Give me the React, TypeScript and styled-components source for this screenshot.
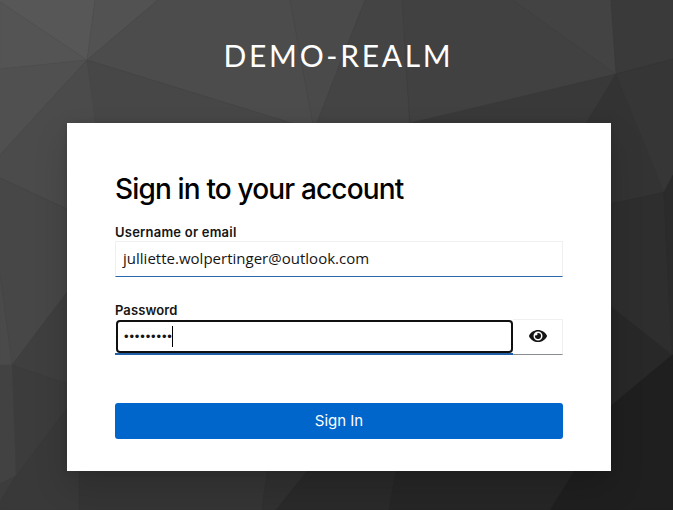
import React from "react";
import styled, { createGlobalStyle } from "styled-components";
import { FaEye } from "react-icons/fa";

const GlobalStyle = createGlobalStyle`
  * { box-sizing: border-box; }
  html, body { margin: 0; padding: 0; }
  body { background: #333; color: #151515; font-family: Inter, "Liberation Sans", sans-serif; overflow: hidden; }
`;

const Page = styled.div`
  position: relative;
  width: 673px;
  height: 510px;
  overflow: hidden;
  display: flex;
  flex-direction: column;
`;

const Backdrop = styled.svg`
  position: absolute;
  inset: 0;
  z-index: -1;
`;

const Realm = styled.header`
  height: 123px;
  padding: 34px 0 0 4px;
  text-align: center;
  color: #fff;
  font: 400 30px/43px Lato, sans-serif;
  letter-spacing: 2.7px;
`;

const Card = styled.main`
  width: 544px;
  height: 348px;
  margin-left: 67px;
  padding: 48px;
  background: #fff;
  box-shadow: 0 16px 32px 0 rgba(3, 3, 3, 0.16), 0 0 8px 0 rgba(3, 3, 3, 0.1);
`;

const Heading = styled.h1`
  margin: 0;
  height: 51px;
  font: 500 28px/36px Inter, sans-serif;
  letter-spacing: -0.84px;
  color: #000;
  white-space: nowrap;
`;

const Field = styled.div`
  height: 78px;
`;

const Label = styled.label<{ $tracking: string }>`
  display: block;
  height: 19px;
  font: 600 13px/20px Inter, sans-serif;
  letter-spacing: ${(p) => p.$tracking};
`;

const TextBox = styled.div`
  height: 36px;
  padding-left: 7px;
  border: 1px solid #f0f0f0;
  border-bottom-color: #2b67ac;
  font: 400 15px/33px "Open Sans", sans-serif;
  white-space: nowrap;
`;

const Email = styled.span`
  letter-spacing: 0.01px;
`;

const PasswordRow = styled.div`
  display: flex;
  height: 36px;
`;

const PasswordBox = styled.div`
  width: 398px;
  height: 36px;
  padding: 1px 0 0 1px;
  border-bottom: 2px solid #1f5fa8;
`;

const FocusRing = styled.div`
  display: flex;
  align-items: center;
  height: 33px;
  padding-left: 6px;
  border: 2px solid #101010;
  border-radius: 4px;
`;

const Dots = styled.span`
  width: 48px;
  font: 400 13px/28px "Liberation Sans", sans-serif;
  letter-spacing: 0.86px;
  white-space: nowrap;
`;

const Caret = styled.span`
  width: 1px;
  height: 21px;
  margin-top: -1px;
  background: #000;
`;

const RevealButton = styled.button`
  display: flex;
  align-items: center;
  justify-content: center;
  width: 50px;
  height: 36px;
  padding: 0;
  border: 1px solid #f0f0f0;
  border-left: 0;
  border-bottom-color: #8a8d90;
  background: #fff;
  color: #151515;
`;

const EyeIcon = styled(FaEye)`
  width: 18px;
  height: 16px;
  margin-top: -2px;
`;

const SubmitButton = styled.button`
  display: block;
  width: 100%;
  height: 36px;
  margin-top: 25px;
  padding: 0;
  border: 0;
  border-radius: 3px;
  background: #0066cc;
  color: #fff;
  font: 400 15px/36px Inter, sans-serif;
`;

const facets: [string, string][] = [
  ["0,0 95,0 87,60 0,2", "#575757"],
  ["0,2 87,60 0,69", "#545454"],
  ["95,0 158,0 87,60", "#525252"],
  ["0,69 87,60 0,155", "#505050"],
  ["87,60 0,155 0,178 67,209 96,209 96,123", "#4b4b4b"],
  ["158,0 290,0 314,130 87,60", "#4c4c4c"],
  ["87,60 314,130 96,130", "#474747"],
  ["290,0 365,0 314,130", "#4a4a4a"],
  ["365,0 402,0 410,130 314,130", "#444444"],
  ["402,0 513,0 616,74 410,125", "#414141"],
  ["513,0 611,0 616,74", "#434343"],
  ["611,0 673,0 673,59 616,74", "#3a3a3a"],
  ["616,74 410,123 410,130 582,130", "#393939"],
  ["616,74 664,192 600,206 582,130", "#333333"],
  ["616,74 673,59 673,175 664,192", "#363636"],
  ["664,192 600,206 600,298 672,355", "#2e2e2e"],
  ["664,192 673,175 673,355 672,355", "#2b2b2b"],
  ["672,355 600,298 600,415", "#282828"],
  ["672,355 673,355 673,510 550,510 600,415", "#1f1f1f"],
  ["0,178 80,215 80,275 12,365 0,275", "#474747"],
  ["0,275 12,365 0,365", "#4a4a4a"],
  ["12,365 80,275 80,388", "#3f3f3f"],
  ["12,365 80,388 80,391 16,476", "#3c3c3c"],
  ["0,365 12,365 16,476 0,484", "#424242"],
  ["16,476 0,484 0,502", "#3d3d3d"],
  ["16,476 80,391 79,510 0,510 0,502", "#393939"],
  ["79,460 269,460 262,510 79,510", "#353535"],
  ["269,460 316,460 276,510 262,510", "#313131"],
  ["316,460 398,460 389,510 276,510", "#2a2a2a"],
  ["398,460 581,460 550,510 389,510", "#262626"],
];

export default function App() {
  return (
    <Page>
      <GlobalStyle />
      <Backdrop width="673" height="510" viewBox="0 0 673 510" aria-hidden="true">
        {facets.map(([points, fill]) => (
          <polygon key={points} points={points} fill={fill} stroke={fill} strokeWidth="0.4" />
        ))}
      </Backdrop>
      <Realm>DEMO-REALM</Realm>
      <Card>
        <Heading>Sign in to your account</Heading>
        <Field>
          <Label $tracking="0.22px">Username or email</Label>
          <TextBox><Email>julliette.wolpertinger@outlook.com</Email></TextBox>
        </Field>
        <Field>
          <Label $tracking="0.1px">Password</Label>
          <PasswordRow>
            <PasswordBox>
              <FocusRing>
                <Dots>•••••••••</Dots>
                <Caret />
              </FocusRing>
            </PasswordBox>
            <RevealButton type="button" aria-label="Show password"><EyeIcon /></RevealButton>
          </PasswordRow>
        </Field>
        <SubmitButton type="button">Sign In</SubmitButton>
      </Card>
    </Page>
  );
}
